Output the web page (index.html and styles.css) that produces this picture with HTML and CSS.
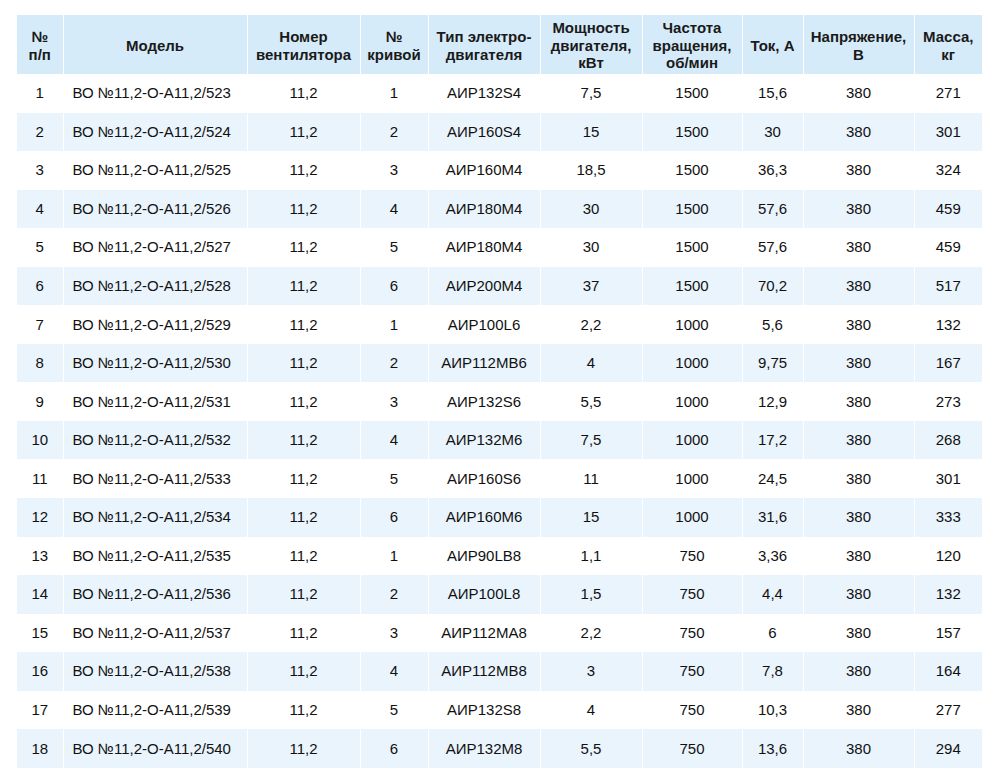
FILE: index.html
```html
<!DOCTYPE html>
<html lang="ru">
<head>
<meta charset="utf-8">
<title>Таблица</title>
<link rel="stylesheet" href="styles.css">
</head>
<body>
<div class="wrap">
<table class="spec">
<colgroup>
<col class="c1"><col class="c2"><col class="c3"><col class="c4"><col class="c5"><col class="c6"><col class="c7"><col class="c8"><col class="c9"><col class="c10">
</colgroup>
<thead>
<tr>
<th>№<br>п/п</th>
<th>Модель</th>
<th>Номер<br>вентилятора</th>
<th>№<br>кривой</th>
<th>Тип электро-<br>двигателя</th>
<th>Мощность<br>двигателя,<br>кВт</th>
<th>Частота<br>вращения,<br>об/мин</th>
<th>Ток, А</th>
<th>Напряжение,<br>В</th>
<th>Масса,<br>кг</th>
</tr>
</thead>
<tbody>
<tr><td>1</td><td class="model">ВО №11,2-О-А11,2/523</td><td>11,2</td><td>1</td><td>АИР132S4</td><td>7,5</td><td>1500</td><td>15,6</td><td>380</td><td>271</td></tr>
<tr><td>2</td><td class="model">ВО №11,2-О-А11,2/524</td><td>11,2</td><td>2</td><td>АИР160S4</td><td>15</td><td>1500</td><td>30</td><td>380</td><td>301</td></tr>
<tr><td>3</td><td class="model">ВО №11,2-О-А11,2/525</td><td>11,2</td><td>3</td><td>АИР160M4</td><td>18,5</td><td>1500</td><td>36,3</td><td>380</td><td>324</td></tr>
<tr><td>4</td><td class="model">ВО №11,2-О-А11,2/526</td><td>11,2</td><td>4</td><td>АИР180M4</td><td>30</td><td>1500</td><td>57,6</td><td>380</td><td>459</td></tr>
<tr><td>5</td><td class="model">ВО №11,2-О-А11,2/527</td><td>11,2</td><td>5</td><td>АИР180M4</td><td>30</td><td>1500</td><td>57,6</td><td>380</td><td>459</td></tr>
<tr><td>6</td><td class="model">ВО №11,2-О-А11,2/528</td><td>11,2</td><td>6</td><td>АИР200M4</td><td>37</td><td>1500</td><td>70,2</td><td>380</td><td>517</td></tr>
<tr><td>7</td><td class="model">ВО №11,2-О-А11,2/529</td><td>11,2</td><td>1</td><td>АИР100L6</td><td>2,2</td><td>1000</td><td>5,6</td><td>380</td><td>132</td></tr>
<tr><td>8</td><td class="model">ВО №11,2-О-А11,2/530</td><td>11,2</td><td>2</td><td>АИР112MB6</td><td>4</td><td>1000</td><td>9,75</td><td>380</td><td>167</td></tr>
<tr><td>9</td><td class="model">ВО №11,2-О-А11,2/531</td><td>11,2</td><td>3</td><td>АИР132S6</td><td>5,5</td><td>1000</td><td>12,9</td><td>380</td><td>273</td></tr>
<tr><td>10</td><td class="model">ВО №11,2-О-А11,2/532</td><td>11,2</td><td>4</td><td>АИР132M6</td><td>7,5</td><td>1000</td><td>17,2</td><td>380</td><td>268</td></tr>
<tr><td>11</td><td class="model">ВО №11,2-О-А11,2/533</td><td>11,2</td><td>5</td><td>АИР160S6</td><td>11</td><td>1000</td><td>24,5</td><td>380</td><td>301</td></tr>
<tr><td>12</td><td class="model">ВО №11,2-О-А11,2/534</td><td>11,2</td><td>6</td><td>АИР160M6</td><td>15</td><td>1000</td><td>31,6</td><td>380</td><td>333</td></tr>
<tr><td>13</td><td class="model">ВО №11,2-О-А11,2/535</td><td>11,2</td><td>1</td><td>АИР90LB8</td><td>1,1</td><td>750</td><td>3,36</td><td>380</td><td>120</td></tr>
<tr><td>14</td><td class="model">ВО №11,2-О-А11,2/536</td><td>11,2</td><td>2</td><td>АИР100L8</td><td>1,5</td><td>750</td><td>4,4</td><td>380</td><td>132</td></tr>
<tr><td>15</td><td class="model">ВО №11,2-О-А11,2/537</td><td>11,2</td><td>3</td><td>АИР112MA8</td><td>2,2</td><td>750</td><td>6</td><td>380</td><td>157</td></tr>
<tr><td>16</td><td class="model">ВО №11,2-О-А11,2/538</td><td>11,2</td><td>4</td><td>АИР112MB8</td><td>3</td><td>750</td><td>7,8</td><td>380</td><td>164</td></tr>
<tr><td>17</td><td class="model">ВО №11,2-О-А11,2/539</td><td>11,2</td><td>5</td><td>АИР132S8</td><td>4</td><td>750</td><td>10,3</td><td>380</td><td>277</td></tr>
<tr><td>18</td><td class="model">ВО №11,2-О-А11,2/540</td><td>11,2</td><td>6</td><td>АИР132M8</td><td>5,5</td><td>750</td><td>13,6</td><td>380</td><td>294</td></tr>
</tbody>
</table>
</div>
</body>
</html>
```
FILE: styles.css
```css
html, body {
  margin: 0;
  padding: 0;
  background: #ffffff;
}

.wrap {
  padding: 15px 0 0 17px;
}

.spec {
  border-collapse: collapse;
  table-layout: fixed;
  width: 965px;
  font-family: "Liberation Sans", Arial, sans-serif;
  font-size: 15px;
  color: #111111;
}

.c1 { width: 46px; }
.c2 { width: 184px; }
.c3 { width: 113px; }
.c4 { width: 68px; }
.c5 { width: 112px; }
.c6 { width: 102px; }
.c7 { width: 100px; }
.c8 { width: 61px; }
.c9 { width: 111px; }
.c10 { width: 68px; }

.spec th,
.spec td {
  padding: 0;
  text-align: center;
  vertical-align: middle;
  border-left: 1px solid #ffffff;
}

.spec th:first-child,
.spec td:first-child {
  border-left: none;
}

.spec thead tr {
  height: 59px;
  background: #d6ebf9;
}

.spec th {
  font-weight: bold;
  line-height: 17.7px;
  padding-top: 2px;
  color: #1a1a1a;
}

.spec tbody tr {
  height: 38.56px;
}

.spec tbody tr:nth-child(even) {
  background: #e9f4fd;
}

.spec td {
  line-height: 18px;
}

.spec td.model {
  text-align: left;
  padding-left: 9px;
}
```
